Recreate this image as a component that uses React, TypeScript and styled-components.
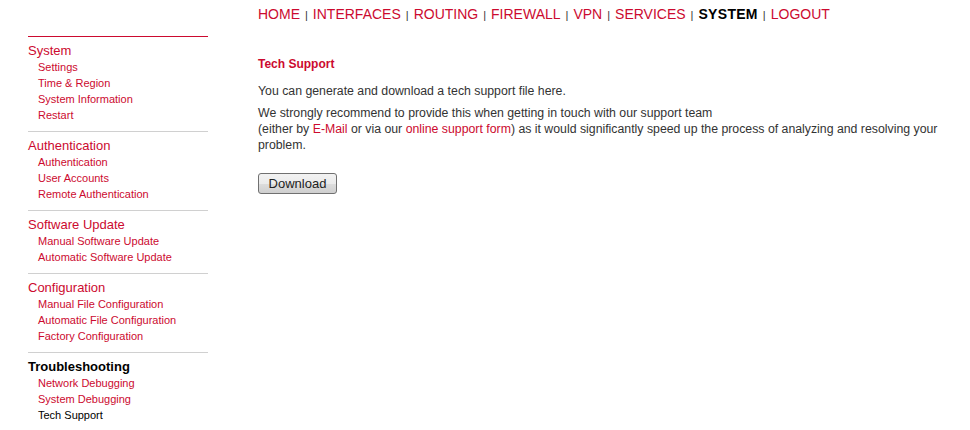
import React from "react";
import styled, { createGlobalStyle } from "styled-components";

const RED = "#cc0a2f";

const Global = createGlobalStyle`
  html, body { margin: 0; padding: 0; background: #fff; }
  body { font-family: "Liberation Sans", Arial, sans-serif; color: #333; }
`;

const Page = styled.div`
  width: 970px;
  height: 430px;
  overflow: hidden;
`;

const TopNav = styled.nav`
  display: flex;
  align-items: center;
  padding: 4px 0 0 258px;
  height: 20px;
  font-size: 14px;
`;

const NavLink = styled.a<{ $active?: boolean }>`
  color: ${(p) => (p.$active ? "#000" : RED)};
  font-weight: ${(p) => (p.$active ? "bold" : "normal")};
  text-decoration: none;
  letter-spacing: ${(p) => (p.$active ? "0.3px" : "0")};
`;

const Sep = styled.span`
  color: #333;
  font-size: 11px;
  margin: 2px 5px 0 5px;
`;

const Body = styled.div`
  display: flex;
  gap: 50px;
  padding: 12px 0 0 28px;
`;

const Sidebar = styled.aside`
  width: 180px;
  flex: none;
  border-top: 1px solid ${RED};
`;

const Group = styled.div<{ $first?: boolean }>`
  border-top: ${(p) => (p.$first ? "none" : "1px solid #d0d0d0")};
  padding: 5px 0 8px;
`;

const GroupTitle = styled.div<{ $active?: boolean }>`
  font-size: 13px;
  line-height: 17px;
  color: ${(p) => (p.$active ? "#000" : RED)};
  font-weight: ${(p) => (p.$active ? "bold" : "normal")};
`;

const Item = styled.a<{ $active?: boolean }>`
  display: block;
  padding-left: 10px;
  font-size: 11px;
  line-height: 16px;
  color: ${(p) => (p.$active ? "#000" : RED)};
  text-decoration: none;
`;

const Main = styled.main`
  flex: 1;
  padding-top: 20px;
  font-size: 12.3px;
  line-height: 16px;
`;

const Title = styled.h2`
  margin: 0 0 11px;
  font-size: 12px;
  line-height: 16px;
  font-weight: bold;
  color: ${RED};
`;

const Para = styled.p`
  margin: 0 0 6px;
`;

const InlineLink = styled.a`
  color: ${RED};
  text-decoration: none;
`;

const Button = styled.button`
  margin-top: 14px;
  width: 79px;
  height: 21px;
  padding: 0;
  font-family: "Liberation Sans", Arial, sans-serif;
  font-size: 13px;
  color: #222;
  border: 1px solid #707070;
  border-radius: 3px;
  background: linear-gradient(#f2f2f2 0%, #ebebeb 50%, #dddddd 51%, #cfcfcf 100%);
`;

const nav = ["HOME", "INTERFACES", "ROUTING", "FIREWALL", "VPN", "SERVICES", "SYSTEM", "LOGOUT"];

const groups: { title: string; items: string[] }[] = [
  { title: "System", items: ["Settings", "Time & Region", "System Information", "Restart"] },
  { title: "Authentication", items: ["Authentication", "User Accounts", "Remote Authentication"] },
  { title: "Software Update", items: ["Manual Software Update", "Automatic Software Update"] },
  { title: "Configuration", items: ["Manual File Configuration", "Automatic File Configuration", "Factory Configuration"] },
  { title: "Troubleshooting", items: ["Network Debugging", "System Debugging", "Tech Support"] },
];

export default function App() {
  return (
    <Page>
      <Global />
      <TopNav>
        {nav.map((n, i) => (
          <React.Fragment key={n}>
            {i > 0 && <Sep>|</Sep>}
            <NavLink $active={n === "SYSTEM"}>{n}</NavLink>
          </React.Fragment>
        ))}
      </TopNav>
      <Body>
        <Sidebar>
          {groups.map((g, gi) => (
            <Group key={g.title} $first={gi === 0}>
              <GroupTitle $active={g.title === "Troubleshooting"}>{g.title}</GroupTitle>
              {g.items.map((it) => (
                <Item key={it} $active={it === "Tech Support"}>{it}</Item>
              ))}
            </Group>
          ))}
        </Sidebar>
        <Main>
          <Title>Tech Support</Title>
          <Para>You can generate and download a tech support file here.</Para>
          <Para>
            We strongly recommend to provide this when getting in touch with our support team
            <br />
            (either by <InlineLink>E-Mail</InlineLink> or via our <InlineLink>online support form</InlineLink>) as it
            would significantly speed up the process of analyzing and resolving your problem.
          </Para>
          <Button>Download</Button>
        </Main>
      </Body>
    </Page>
  );
}
